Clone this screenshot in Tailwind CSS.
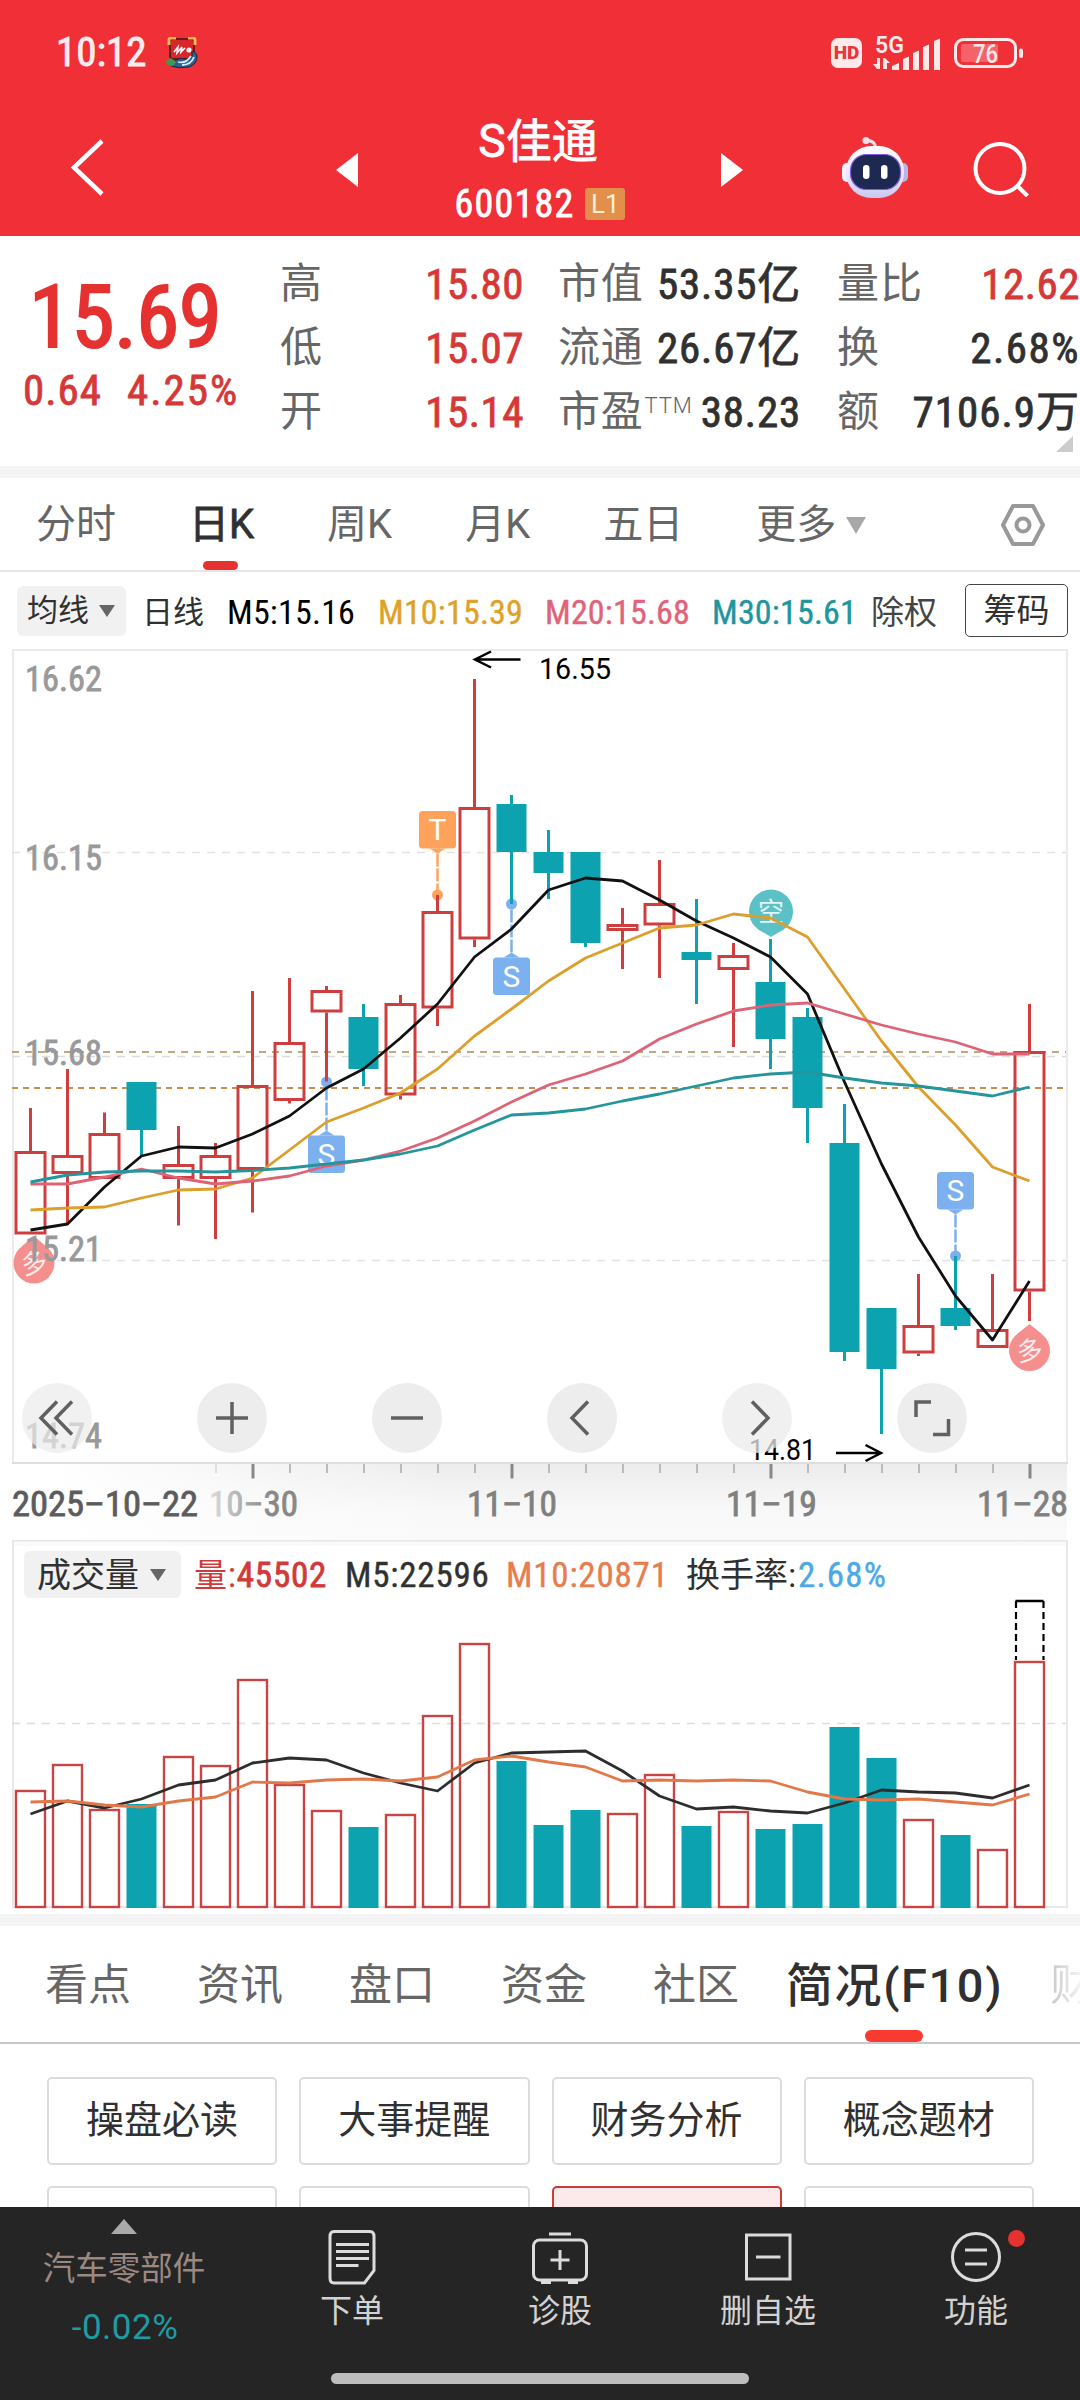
<!DOCTYPE html>
<html lang="zh-CN">
<head>
    <meta charset="UTF-8">
    <meta name="viewport" content="width=device-width, initial-scale=1.0">
    <title>S佳通 600182</title>
    <script src="https://cdn.jsdelivr.net/npm/@tailwindcss/browser@4"></script>
    <style>
        body {
            font-family: 'Roboto Condensed', 'Noto Sans CJK SC', sans-serif;
        }
        .wide {
            font-family: Roboto, 'Noto Sans CJK SC', sans-serif;
        }
        /* 数字略微加粗 */
        .num, .quote div > span:last-child {
            -webkit-text-stroke: 0.8px;
        }
    </style>
</head>
<body class="w-[1080px] h-[2400px] overflow-hidden bg-white text-[#303030] flex flex-col leading-none whitespace-nowrap">

    <!-- 顶部红色区域 -->
    <header class="h-[236px] shrink-0 bg-[#f12f37] text-white">
        <div class="h-[100px] pt-[5px] pl-[56px] pr-[56px] flex items-center">
            <span class="num text-[41px] text-white/90">10:12</span>
            <svg class="ml-[18px]" width="34" height="32" viewBox="0 0 34 32">
                <rect x="5" y="2" width="24" height="20" rx="3" fill="#d9262b" stroke="#3a1a1a" stroke-width="1.5"/>
                <path d="M4 8V3q0-2 2-2h5M23 1h5q2 0 2 2v5" fill="none" stroke="#f5b94a" stroke-width="3"/>
                <path d="M9 15l4-5-1 6 5-6-1 5 4-4" fill="none" stroke="#fff" stroke-width="1.6"/>
                <path d="M8 25q6-5 12-3 5 1 7-3 1-3-1-5 6 1 6 6 0 7-8 10-10 2-18-1z" fill="#2c5f8f" stroke="#16283d" stroke-width="1"/>
                <path d="M13 25q8 2 13-6M17 28q9 0 12-8" fill="none" stroke="#d6ecf7" stroke-width="1.8"/>
                <circle cx="24" cy="13" r="2.6" fill="#e9f3fa"/>
                <path d="M1 24l5-3 5 4-3 4-6-1z" fill="#3c9a52"/>
            </svg>
            <div class="ml-auto flex items-center">
                <span class="wide w-[31px] h-[30px] rounded-[7px] bg-white/90 text-[#e8363d] text-[19px] font-black flex items-center justify-center">HD</span>
                <svg class="ml-[10px] overflow-visible" width="69" height="36" viewBox="872 33 69 36" fill="#fde9ea">
                    <text x="875" y="51" font-family="Roboto" font-weight="600" font-size="23" textLength="29" lengthAdjust="spacingAndGlyphs">5G</text>
                    <path d="M877 56h3v11h-3l-4-5h4zM883 67V56h2l5 5h-3v6z"/>
                    <path d="M892 64l7-3v7h-7zM903 57l6-2.500v13.500h-6zM913 51l6-2.500v19.500h-6zM923 45l6-2.500v25.500h-6zM934 39l6-2.500v31.500h-6z"/>
                </svg>
                <svg class="ml-[12px]" width="71" height="32" viewBox="953 36 71 32">
                    <rect x="955.500" y="38.500" width="60" height="27" rx="8" fill="none" stroke="#fde9ea" stroke-width="3"/>
                    <rect x="961" y="43" width="37" height="18" rx="2" fill="#fff" fill-opacity=".25"/>
                    <rect x="1019" y="47.500" width="4" height="9.500" rx="2" fill="#fde9ea"/>
                    <text x="973" y="61.500" font-family="Roboto" font-weight="500" font-size="25" fill="#fde9ea" textLength="25" lengthAdjust="spacingAndGlyphs">76</text>
                </svg>
            </div>
        </div>
        <div class="h-[136px] flex items-center pl-[68px] pr-[50px]">
            <svg width="38" height="60" viewBox="0 0 38 60" fill="none" stroke="#fff" stroke-width="4.500"><path d="M34 3L6 29.500 34 56"/></svg>
            <svg class="ml-[229px] mt-[3px]" width="24" height="34" viewBox="0 0 24 34"><path d="M23 0v34L1 17z" fill="#fff"/></svg>
            <div class="w-[361px] pt-[5px] flex flex-col items-center gap-[21px]">
                <span class="num text-[46px] wide -ml-[3px]">S佳通</span>
                <span class="flex items-center gap-[11px] ml-[1px]">
                    <span class="num text-[38px] tracking-[1.2px]">600182</span>
                    <span class="wide bg-[#e28f4b] text-[#fdf0d8] text-[26px] w-[40px] h-[32px] rounded-[3px] flex items-center justify-center">L1</span>
                </span>
            </div>
            <svg class="mt-[3px]" width="24" height="34" viewBox="0 0 24 34"><path d="M1 0v34l22-17z" fill="#fff"/></svg>
            <svg class="ml-auto" width="68" height="64" viewBox="841 136 68 64">
                <defs>
                    <linearGradient id="bot" x1="0" y1="0" x2="0" y2="1"><stop offset="0" stop-color="#fff"/><stop offset=".6" stop-color="#e9e4fb"/><stop offset="1" stop-color="#c9c6f2"/></linearGradient>
                </defs>
                <path d="M865 140.500q10-1 11 8" fill="none" stroke="#f7dfe6" stroke-width="3"/>
                <circle cx="866" cy="140.500" r="3.600" fill="#f7dfe6"/>
                <rect x="842" y="163" width="12" height="19" rx="5" fill="#f4f0ff"/>
                <rect x="896" y="163" width="12" height="19" rx="5" fill="#b9b5ea"/>
                <rect x="846" y="146" width="58" height="52" rx="25" fill="url(#bot)"/>
                <rect x="850.500" y="154.500" width="50" height="35" rx="16" fill="#1d2950" stroke="#7d5fe0" stroke-width="1.200"/>
                <rect x="863" y="165" width="6.500" height="14" rx="3.200" fill="#fff"/>
                <rect x="881" y="165" width="6.500" height="14" rx="3.200" fill="#fff"/>
            </svg>
            <svg class="ml-[63px]" width="58" height="58" viewBox="972 139 58 58" fill="none" stroke="#fff" stroke-width="4"><circle cx="1000" cy="168.500" r="24.500"/><path d="M1017.500 186l10 10"/></svg>
        </div>
    </header>

    <!-- 行情数据 -->
    <section class="quote h-[230px] shrink-0 relative flex overflow-hidden">
        <div class="w-[280px] pt-[38px] flex flex-col">
            <span class="ml-[29px] text-[87px] text-[#e63131] tracking-[-0.5px] [-webkit-text-stroke:2px]">15.69</span>
            <span class="ml-[23px] mt-[8px] flex gap-[25px] text-[43px] text-[#d63838]"><span class="tracking-[1px]">0.64</span><span class="tracking-[2px]">4.25%</span></span>
        </div>
        <div class="w-[244px] pt-[16px] text-[43px] grid grid-rows-[64px_64px_64px] tracking-[0.5px]">
            <div class="flex justify-between items-center"><span class="text-[42px] tracking-normal text-[#666]">高</span><span class="text-[#d63838]">15.80</span></div>
            <div class="flex justify-between items-center"><span class="text-[42px] tracking-normal text-[#666]">低</span><span class="text-[#d63838]">15.07</span></div>
            <div class="flex justify-between items-center"><span class="text-[42px] tracking-normal text-[#666]">开</span><span class="text-[#d63838]">15.14</span></div>
        </div>
        <div class="ml-[34px] w-[243px] pt-[16px] text-[43px] grid grid-rows-[64px_64px_64px] tracking-[0.8px]">
            <div class="flex justify-between items-center"><span class="text-[42px] tracking-[0.8px] text-[#666]">市值</span><span>53.35亿</span></div>
            <div class="flex justify-between items-center"><span class="text-[42px] tracking-[0.8px] text-[#666]">流通</span><span>26.67亿</span></div>
            <div class="flex justify-between items-center"><span class="text-[42px] tracking-[0.8px] text-[#666] flex">市盈<b class="wide text-[22px] font-light mt-1 ml-[1px]">TTM</b></span><span>38.23</span></div>
        </div>
        <div class="ml-[36px] w-[243px] pt-[16px] text-[43px] grid grid-rows-[64px_64px_64px] tracking-[0.5px]">
            <div class="flex justify-between items-center"><span class="text-[42px] tracking-[1px] text-[#666]">量比</span><span class="text-[#d63838]">12.62</span></div>
            <div class="flex justify-between items-center"><span class="text-[42px] tracking-normal text-[#666]">换</span><span class="tracking-[1.5px]">2.68%</span></div>
            <div class="flex justify-between items-center"><span class="text-[42px] tracking-normal text-[#666]">额</span><span class="tracking-[1px]">7106.9万</span></div>
        </div>
        <svg class="absolute right-[7px] bottom-[14px]" width="17" height="16" viewBox="0 0 17 16"><path d="M17 0v16H0z" fill="#ccc"/></svg>
    </section>
    <div class="h-[12px] shrink-0 bg-[#f4f4f4]"></div>

    <!-- 周期切换 -->
    <nav class="wide h-[94px] shrink-0 border-b-2 border-[#e6e6e6] pt-[2px] pl-[36px] pr-[34px] flex items-center gap-[73px] text-[40px] text-[#666]">
        <span>分时</span>
        <span class="num relative h-full flex items-center text-[#303030]">日K<i class="absolute bottom-0 left-[14px] w-[35px] h-[9px] rounded-[5px] bg-[#e63131]"></i></span>
        <span>周K</span>
        <span>月K</span>
        <span>五日</span>
        <span class="flex items-center gap-[10px]">更多<svg width="20" height="17" viewBox="0 0 20 17"><path d="M0 0h20L10 17z" fill="#a8a8a8"/></svg></span>
        <svg class="ml-auto" width="46" height="44" viewBox="0 0 46 44" fill="none" stroke="#999" stroke-width="4" stroke-linejoin="round"><path d="M13 3h20l10 19-10 19H13L3 22z"/><circle cx="23" cy="22" r="6.500"/></svg>
    </nav>

    <!-- 均线指标 -->
    <div class="h-[76px] shrink-0 pl-[17px] pr-[12px] pt-[1px] flex items-center text-[34px]">
        <span class="w-[109px] h-[50px] rounded-[6px] bg-[#f1f1f1] pl-[10px] flex items-center gap-[10px] text-[31px]">均线<svg width="16" height="12" viewBox="0 0 16 12"><path d="M0 0h16L8 12z" fill="#666"/></svg></span>
        <span class="ml-[16px] pt-[3px] text-[31px]">日线</span>
        <span class="ml-[23px] pt-[3px] w-[151px] tracking-[0.2px] text-black">M5:15.16</span>
        <span class="w-[167px] pt-[3px] tracking-[0.2px] text-[#dfa127] [-webkit-text-stroke:0.4px]">M10:15.39</span>
        <span class="w-[167px] pt-[3px] tracking-[0.2px] text-[#e0637a] [-webkit-text-stroke:0.4px]">M20:15.68</span>
        <span class="w-[159px] pt-[3px] tracking-[0.2px] text-[#1d96a0] [-webkit-text-stroke:0.4px]">M30:15.61</span>
        <span class="pt-[3px] text-[33px] text-[#444]">除权</span>
        <span class="ml-auto w-[103px] h-[53px] rounded-[5px] border-[1.5px] border-[#444] text-[33px] flex items-center justify-center">筹码</span>
    </div>

    <!-- K线图 -->
    <div class="relative h-[892px] shrink-0">
        <svg id="kline" width="1080" height="892" viewBox="0 648 1080 892" class="block"></svg>
        <div class="absolute left-[22px] top-[735px] flex gap-[105px]">
            <span class="size-[70px] rounded-full bg-[#ebebeb]/70 flex items-center justify-center"><svg width="40" height="40" viewBox="0 0 40 40" fill="none" stroke="#606060" stroke-width="3.500"><path d="M20 3.500L4 20l16 16.500M35 3.500L19 20l16 16.500"/></svg></span>
            <span class="size-[70px] rounded-full bg-[#ebebeb]/90 flex items-center justify-center"><svg width="40" height="40" viewBox="0 0 40 40" fill="none" stroke="#606060" stroke-width="3.500"><path d="M4 20h32M20 4v32"/></svg></span>
            <span class="size-[70px] rounded-full bg-[#ebebeb]/90 flex items-center justify-center"><svg width="40" height="40" viewBox="0 0 40 40" fill="none" stroke="#606060" stroke-width="3.500"><path d="M4 20h32"/></svg></span>
            <span class="size-[70px] rounded-full bg-[#ebebeb]/90 flex items-center justify-center"><svg width="40" height="40" viewBox="0 0 40 40" fill="none" stroke="#606060" stroke-width="3.500"><path d="M26 3.500L10 20l16 16.500"/></svg></span>
            <span class="size-[70px] rounded-full bg-[#ebebeb]/75 flex items-center justify-center"><svg width="40" height="40" viewBox="0 0 40 40" fill="none" stroke="#606060" stroke-width="3.500"><path d="M15 3.500L31 20 15 36.500"/></svg></span>
            <span class="size-[70px] rounded-full bg-[#ebebeb]/90 flex items-center justify-center"><svg width="40" height="40" viewBox="0 0 40 40" fill="none" stroke="#606060" stroke-width="3.500"><path d="M4 19V4h15M21 36.500h15.500V21"/></svg></span>
        </div>
    </div>

    <!-- 成交量 -->
    <div class="relative h-[374px] shrink-0">
        <svg id="volume" width="1080" height="374" viewBox="0 1540 1080 374" class="absolute inset-0"></svg>
        <div class="relative pt-[11px] pl-[24px] flex items-center text-[35px]">
            <span class="w-[157px] h-[47px] rounded-[6px] bg-[#f1f1f1] pl-[13px] flex items-center gap-[11px] text-[34px]">成交量<svg width="16" height="12" viewBox="0 0 16 12"><path d="M0 0h16L8 12z" fill="#666"/></svg></span>
            <span class="ml-[13px] pt-[2px] w-[151px] tracking-[0.8px] text-[#d03a3a]"><span class="text-[33px]">量</span>:<span class="num">45502</span></span>
            <span class="w-[161px] pt-[2px] tracking-[0.8px] [-webkit-text-stroke:0.4px]">M5:22596</span>
            <span class="w-[180px] pt-[2px] tracking-[0.8px] text-[#e77d4c] [-webkit-text-stroke:0.4px]">M10:20871</span>
            <span class="pt-px text-[34px]">换手率:</span><span class="ml-[2px] pt-[2px] tracking-[1.2px] text-[#4aa9e6] [-webkit-text-stroke:0.4px]">2.68%</span>
        </div>
    </div>
    <div class="h-[12px] shrink-0 bg-[#f4f4f4]"></div>

    <!-- 资料标签 -->
    <nav class="h-[118px] shrink-0 border-b-2 border-[#c8c8c8] pt-[3px] pl-[45px] flex items-center gap-[66px] text-[43px] text-[#666]">
        <span>看点</span>
        <span>资讯</span>
        <span>盘口</span>
        <span>资金</span>
        <span>社区</span>
        <span class="wide relative h-full w-[220px] flex items-center -ml-[19px] text-[47px] tracking-[1.6px] font-medium text-[#303030]">简况(F10)<i class="absolute bottom-0 left-[79px] w-[58px] h-[12px] rounded-[6px] bg-[#f93a31]"></i></span>
        <span class="-ml-[19px] bg-linear-to-r from-[#c8c8c8] to-white to-90% bg-clip-text text-transparent">财</span>
    </nav>
    <div class="h-[163px] shrink-0 overflow-hidden pt-[33px] px-[47px] pr-[46px] grid grid-cols-4 auto-rows-[88px] gap-x-[22px] gap-y-[21px] text-[38px] text-center leading-[83px]">
        <span class="border-2 border-[#dcdcdc] rounded-[5px]">操盘必读</span>
        <span class="border-2 border-[#dcdcdc] rounded-[5px]">大事提醒</span>
        <span class="border-2 border-[#dcdcdc] rounded-[5px]">财务分析</span>
        <span class="border-2 border-[#dcdcdc] rounded-[5px]">概念题材</span>
        <span class="border-2 border-[#dcdcdc] rounded-[5px]"></span>
        <span class="border-2 border-[#dcdcdc] rounded-[5px]"></span>
        <span class="border-2 border-[#cc3a3a] bg-[#fce9ea] rounded-[5px]"></span>
        <span class="border-2 border-[#dcdcdc] rounded-[5px]"></span>
    </div>

    <!-- 底部操作栏 -->
    <footer class="h-[193px] shrink-0 bg-[#252525] text-[#d2d2d2] text-[32px]">
        <div class="h-[166px] flex">
            <div class="w-[248px] pt-[12px] flex flex-col items-center">
                <svg width="26" height="15" viewBox="0 0 26 15"><path d="M0 15h26L13 0z" fill="#aaa"/></svg>
                <span class="mt-[19px] text-[32.500px] text-[#9b8981]">汽车零部件</span>
                <span class="wide mt-[24px] ml-[2px] text-[35px] tracking-[0.5px] text-[#1f9ba3]">-0.02%</span>
            </div>
            <div class="w-[208px] pt-[22px] flex flex-col items-center gap-[10px]">
                <svg width="60" height="56" viewBox="322 2229 60 56" fill="none" stroke="#dcdcdc" stroke-width="3"><path d="M334 2231.500h36q4 0 4 5v34l-9.500 12.500h-30.500q-4 0-4-5v-41.500q0-5 4-5z"/><path d="M336 2244.500h33M336 2251.500h33M336 2258.500h33M336 2265.500h22.500"/></svg>
                <span>下单</span>
            </div>
            <div class="w-[208px] pt-[22px] flex flex-col items-center gap-[10px]">
                <svg width="60" height="56" viewBox="530 2229 60 56" fill="none" stroke="#dcdcdc" stroke-width="3"><rect x="533.500" y="2240" width="53" height="40" rx="6"/><path d="M549 2234h22M560 2250v20M550.500 2260h19M541 2282.500h10M568 2282.500h10"/></svg>
                <span>诊股</span>
            </div>
            <div class="w-[208px] pt-[22px] flex flex-col items-center gap-[10px]">
                <svg width="60" height="56" viewBox="738 2229 60 56" fill="none" stroke="#dcdcdc" stroke-width="3"><rect x="746.500" y="2235" width="43.500" height="44"/><path d="M756 2257h24.500"/></svg>
                <span>删自选</span>
            </div>
            <div class="relative w-[208px] pt-[22px] flex flex-col items-center gap-[10px]">
                <svg width="60" height="56" viewBox="946 2229 60 56" fill="none" stroke="#dcdcdc" stroke-width="3"><circle cx="976" cy="2257" r="23.500"/><path d="M965 2250h22M965 2264h22"/></svg>
                <span>功能</span>
                <i class="absolute right-[55px] top-[23px] size-[17px] rounded-full bg-[#e63131]"></i>
            </div>
        </div>
        <div class="mx-auto w-[418px] h-[11px] rounded-full bg-[#bebebe]"></div>
    </footer>

    <script>
        const RED = '#cf3e3e';
        const GREEN = '#0da2b0';
        const cx = i => 30.5 + 37 * i;

        // [类型, 最高, 实体上沿, 实体下沿, 最低, 成交量上沿]
        const candles = [
            ['r', 1108, 1151, 1234.5, 1234.5, 1790],
            ['r', 1069, 1155, 1174, 1225, 1764],
            ['r', 1112.5, 1133, 1179, 1179, 1809],
            ['g', 1082, 1082, 1130, 1156, 1804],
            ['r', 1126, 1164, 1179, 1225.5, 1756],
            ['r', 1143, 1155, 1179, 1239, 1765],
            ['r', 991, 1085, 1170, 1212.5, 1679],
            ['r', 978, 1042, 1101, 1103.5, 1784],
            ['r', 986, 990, 1012.5, 1081.5, 1810],
            ['g', 1004, 1017, 1069, 1086, 1827],
            ['r', 995, 1003, 1095.5, 1099.5, 1814],
            ['r', 895, 911, 1008.5, 1026, 1715],
            ['r', 679, 807, 939.5, 947, 1643],
            ['g', 795, 804, 852, 904, 1761],
            ['g', 830, 852, 873, 899, 1825],
            ['g', 852, 852, 943, 947, 1810],
            ['r', 908, 924, 931, 969, 1813],
            ['r', 860, 903, 925.5, 978, 1774],
            ['g', 899, 952, 960, 1004, 1826],
            ['r', 943, 955, 970, 1047, 1811],
            ['g', 939, 982, 1039, 1069, 1829],
            ['g', 1008, 1017, 1108, 1143, 1824],
            ['g', 1104, 1143, 1352, 1361, 1727],
            ['g', 1308, 1308, 1369, 1434, 1758],
            ['r', 1274, 1325, 1353.5, 1356, 1819],
            ['g', 1256, 1308, 1326, 1330, 1835],
            ['r', 1274, 1329, 1348, 1348, 1849],
            ['r', 1004, 1051, 1291.5, 1321, 1661],
        ];

        const ma30 = [1182, 1175, 1172, 1171, 1171, 1172, 1170.5, 1168, 1164, 1160, 1154, 1146, 1130, 1115, 1113, 1109, 1101, 1094, 1086, 1078, 1074, 1072, 1078, 1083, 1086, 1091, 1096, 1087];
        const ma20 = [1184, 1184, 1177, 1169, 1178, 1184, 1181, 1176, 1166, 1160, 1151, 1138, 1121, 1102, 1085, 1074, 1061, 1039, 1024, 1011, 1005, 1003, 1014, 1025, 1034, 1042, 1054, 1054];
        const ma10 = [1210, 1208, 1207, 1198, 1190, 1189, 1178, 1150, 1122, 1108, 1093, 1069, 1036, 1009, 981, 958, 943, 928, 925, 914, 918, 937, 989, 1041, 1087, 1125, 1167, 1181];
        const ma5 = [1230, 1224, 1187, 1156, 1147, 1148, 1134, 1116, 1088, 1069, 1038, 1004, 957, 929, 890, 878, 881, 900, 921, 938, 957, 994, 1082, 1164, 1237, 1296, 1340, 1281];
        const vol5 = [1814, 1801, 1808, 1799, 1785, 1780, 1763, 1758, 1760, 1773, 1783, 1791, 1763, 1753, 1752, 1751, 1771, 1796, 1809, 1807, 1811, 1813, 1803, 1790, 1792, 1793, 1798, 1785];
        const vol10 = [1802, 1801, 1805, 1807, 1801, 1797, 1782, 1783, 1780, 1779, 1781, 1777, 1760, 1756, 1762, 1767, 1781, 1780, 1781, 1780, 1781, 1792, 1799, 1800, 1799, 1802, 1805, 1794];

        function poly(arr, color, w = 2.8) {
            return `<polyline points="${arr.map((y, i) => cx(i) + ',' + y).join(' ')}" fill="none" stroke="${color}" stroke-width="${w}" stroke-linejoin="round"/>`;
        }

        function text(str, x, y, len, color, size = 35, stroke = 0.8, family = 'Roboto Condensed') {
            return `<text x="${x}" y="${y}" fill="${color}" stroke="${color}" stroke-width="${stroke}" font-family="${family}" font-size="${size}" textLength="${len}" lengthAdjust="spacingAndGlyphs">${str}</text>`;
        }

        // 虚线
        function dash(y, color, w, pattern) {
            return `<path d="M12 ${y}H1066" stroke="${color}" stroke-width="${w}" stroke-dasharray="${pattern}"/>`;
        }

        // 买卖点标记,dotY 为圆点位置,boxY 为方框上沿
        function marker(i, letter, dotY, boxY, color) {
            const x = cx(i);
            const above = boxY < dotY;
            const edge = above ? boxY + 37.5 : boxY;
            const tip = above ? edge + 5 : edge - 5;
            return `<circle cx="${x}" cy="${dotY}" r="5.5" fill="${color}"/>
                <path d="M${x} ${tip}V${dotY}" stroke="${color}" stroke-width="2.5" stroke-dasharray="13 2"/>
                <rect x="${x - 18.5}" y="${boxY}" width="37" height="37.5" rx="3.5" fill="${color}"/>
                <path d="M${x - 8} ${edge}H${x + 8}L${x} ${tip}z" fill="${color}"/>
                <text x="${x}" y="${boxY + 29}" text-anchor="middle" font-family="Roboto" font-size="30" fill="#fff">${letter}</text>`;
        }

        // 多空水滴
        function pin(x, y, r, tip, letter, color, rot) {
            const s = tip < y ? -1 : 1;
            return `<g><circle cx="${x}" cy="${y}" r="${r}" fill="${color}"/>
                <path d="M${x - r * .6} ${y + s * r * .8}L${x} ${tip}L${x + r * .6} ${y + s * r * .8}z" fill="${color}"/>
                <text transform="translate(${x} ${y}) rotate(${rot})" y="9.5" text-anchor="middle" font-family="Noto Sans CJK SC" font-size="26" fill="#fff" fill-opacity=".85">${letter}</text></g>`;
        }

        let k = `<defs>
            <linearGradient id="fade" x1="0" x2="1"><stop offset=".04" stop-color="#fff"/><stop offset=".22" stop-color="#fff" stop-opacity=".5"/><stop offset=".42" stop-color="#fff" stop-opacity="0"/></linearGradient>
            <linearGradient id="strip" x1="0" y1="0" x2="0" y2="1"><stop offset="0" stop-color="#ececec"/><stop offset=".6" stop-color="#f8f8f8"/><stop offset="1" stop-color="#fafafa"/></linearGradient>
            <linearGradient id="dt" gradientUnits="userSpaceOnUse" x1="210" x2="270" y1="0" y2="0"><stop offset="0" stop-color="#dcdcdc"/><stop offset="1" stop-color="#888"/></linearGradient>
        </defs>
        <rect x="13" y="1463" width="1054" height="77" fill="url(#strip)"/>
        <rect x="12" y="1463" width="1056" height="77" fill="url(#fade)"/>
        <path d="M13 1463V650H1067V1463z" fill="none" stroke="#ebebeb" stroke-width="2"/>`;
        k += dash(852.5, '#e3e3e3', 1.5, '8 7') + dash(1056.5, '#dcdcdc', 1.5, '8 7') + dash(1260.5, '#e3e3e3', 1.5, '8 7');
        k += dash(1052, '#c0a878', 2, '7 6') + dash(1088, '#c98f4e', 2, '6 5');

        k += marker(11, 'T', 895, 811, '#ffa35c') + marker(13, 'S', 904, 957.5, '#7db0ef')
            + marker(8, 'S', 1082, 1135.5, '#7db0ef') + marker(25, 'S', 1256, 1172, '#7db0ef');
        k += pin(771, 911.5, 22, 937, '空', '#5bc1c7', 0) + pin(34, 1263, 20.5, 1236, '多', '#f58f8e', -14) + pin(1029.5, 1350.5, 20.5, 1324, '多', '#f58f8e', -8);

        candles.forEach(([type, high, top, bottom, low], i) => {
            const x = cx(i);
            const color = type === 'r' ? RED : GREEN;
            k += `<path d="M${x} ${high}V${top}M${x} ${bottom}V${low}" stroke="${color}" stroke-width="3"/>`;
            k += type === 'r'
                ? `<rect x="${x - 14.5}" y="${top + 1.5}" width="29" height="${bottom - top - 3}" fill="none" stroke="${RED}" stroke-width="3"/>`
                : `<rect x="${x - 15}" y="${top}" width="30" height="${bottom - top}" fill="${GREEN}"/>`;
        });
        k += poly(ma5, '#111') + poly(ma10, '#dc9f2c') + poly(ma20, '#df6377') + poly(ma30, '#24959c');

        [['16.62', 691], ['16.15', 870], ['15.68', 1064.5], ['15.21', 1260.5], ['14.74', 1447.5]].forEach(([t, y]) => k += text(t, 25, y, 77, '#999'));
        k += text('16.55', 539, 679, 72, '#000', 30, 0, 'Roboto') + text('14.81', 749, 1460, 67, '#000', 30, 0, 'Roboto');
        k += `<g fill="none" stroke="#000" stroke-width="2.5"><path d="M520.500 659.500H475M491 651.500L475 659.500L491 667.500"/><path d="M836 1453H881M865.500 1445L881 1453L865.500 1461"/></g>`;

        // 日期轴
        k += '<path d="M12 1463H1068" stroke="#dedede" stroke-width="2"/>';
        for (let i = 5; i < 28; i++) {
            const major = i % 7 === 6;
            k += `<path d="M${cx(i) + .5} 1464V${major ? 1478.5 : 1473}" stroke="${major ? '#888' : i === 5 ? '#e0e0e0' : '#bbb'}" stroke-width="${major ? 3 : 2}"/>`;
        }
        k += text('2025–10–22', 12, 1516, 186, '#5c5c5c') + text('10–30', 209, 1516, 89, 'url(#dt)')
            + text('11–10', 467, 1516, 90, '#808080') + text('11–19', 726, 1516, 91, '#808080') + text('11–28', 977, 1516, 91, '#808080');
        document.getElementById('kline').innerHTML = k;

        let v = `<rect x="13" y="1540" width="1054" height="6" fill="#fafafa"/>
            <path d="M13 1907V1540.500H1067V1907z" fill="none" stroke="#e8e8e8" stroke-width="2"/>` + dash(1723.5, '#dcdcdc', 1.5, '8 7');
        candles.forEach((c, i) => {
            const x = cx(i);
            const top = c[5];
            v += c[0] === 'r'
                ? `<rect x="${x - 14.5}" y="${top + 1}" width="29" height="${1907 - top - 1}" fill="none" stroke="#c94545" stroke-width="2.4"/>`
                : `<rect x="${x - 15}" y="${top}" width="30" height="${1908 - top}" fill="${GREEN}"/>`;
        });
        v += poly(vol5, '#2d2d2d') + poly(vol10, '#e2784a');
        v += `<path d="M1015.500 1601H1043.500" stroke="#000" stroke-width="2.5"/><path d="M1016 1601V1660M1043.500 1601V1660" stroke="#000" stroke-width="2.2" stroke-dasharray="7 4"/>`;
        document.getElementById('volume').innerHTML = v;
    </script>
</body>
</html>
